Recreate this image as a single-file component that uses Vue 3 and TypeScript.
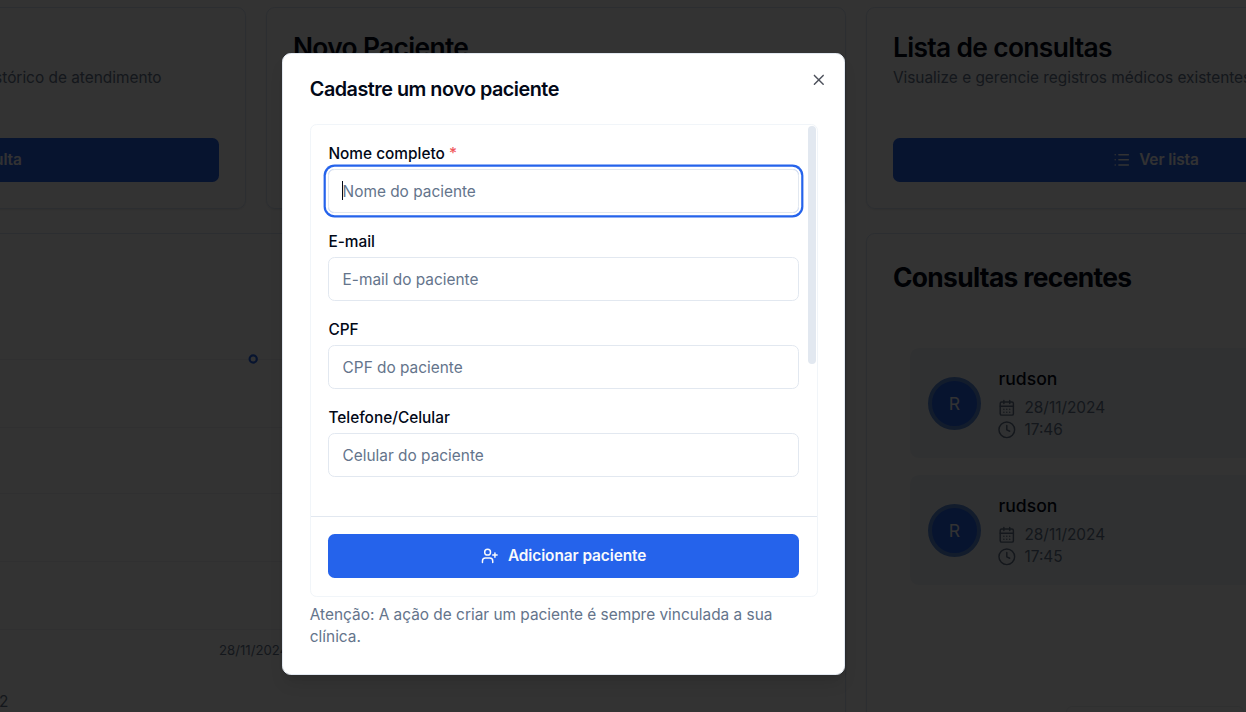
<script setup lang="ts">
interface Field {
  id: string
  label: string
  placeholder: string
  required?: boolean
  focused?: boolean
}

interface Appointment {
  name: string
  date: string
  time: string
}

const fields: Field[] = [
  { id: 'name', label: 'Nome completo', placeholder: 'Nome do paciente', required: true, focused: true },
  { id: 'email', label: 'E-mail', placeholder: 'E-mail do paciente' },
  { id: 'cpf', label: 'CPF', placeholder: 'CPF do paciente' },
  { id: 'phone', label: 'Telefone/Celular', placeholder: 'Celular do paciente' },
]

const appointments: Appointment[] = [
  { name: 'rudson', date: '28/11/2024', time: '17:46' },
  { name: 'rudson', date: '28/11/2024', time: '17:45' },
]

const gridLines: number[] = [125.5, 193.5, 259.5, 327.5, 395.5]
</script>

<template>
  <div class="screen">
    <main class="page">
      <section class="card action">
        <h2>Nova consulta</h2>
        <p class="right">Registre o histórico de atendimento</p>
        <button class="primary">
          <svg class="icon" viewBox="0 0 24 24"><path d="M5 12h14M12 5v14" /></svg>
          <span>Nova consulta</span>
        </button>
      </section>
      <section class="card action">
        <h2>Novo Paciente</h2>
      </section>
      <section class="card action">
        <h2>Lista de consultas</h2>
        <p>Visualize e gerencie registros médicos existentes</p>
        <button class="primary">
          <svg class="icon" viewBox="0 0 24 24"><path d="M3 5h.01M3 12h.01M3 19h.01M8 5h13M8 12h13M8 19h13" /></svg>
          <span>Ver lista</span>
        </button>
      </section>

      <section class="card chart-card">
        <svg class="chart" width="1180" height="520" viewBox="0 0 1180 520">
          <line v-for="y in gridLines" :key="y" x1="0" x2="1180" :y1="y" :y2="y" />
          <circle cx="586.2" cy="125" r="3.6" />
          <text class="tick" x="552" y="421">28/11/2024</text>
          <text class="total" x="341.5" y="473" text-anchor="end">Total: 2</text>
        </svg>
      </section>
      <section class="card recent">
        <h2>Consultas recentes</h2>
        <div class="list">
          <article v-for="item in appointments" :key="item.time" class="appointment">
            <div class="avatar">R</div>
            <div class="details">
              <strong>{{ item.name }}</strong>
              <span class="meta">
                <svg class="icon" viewBox="0 0 24 24">
                  <path d="M8 2v4M16 2v4M3 10h18M8 14h.01M12 14h.01M16 14h.01M8 18h.01M12 18h.01M16 18h.01" />
                  <rect x="3" y="4" width="18" height="18" rx="2" />
                </svg>
                {{ item.date }}
              </span>
              <span class="meta">
                <svg class="icon" viewBox="0 0 24 24"><circle cx="12" cy="12" r="10.7" /><path d="M12 6v6l4 2" /></svg>
                {{ item.time }}
              </span>
            </div>
          </article>
        </div>
      </section>
    </main>
    <div class="floating"></div>

    <div class="overlay">
      <div class="dialog" role="dialog" aria-labelledby="dialog-title">
        <button class="close" aria-label="Fechar">
          <svg viewBox="0 0 24 24"><path d="M18 6 6 18M6 6l12 12" /></svg>
        </button>
        <h1 id="dialog-title">Cadastre um novo paciente</h1>
        <form class="panel" @submit.prevent>
          <div class="scroll">
            <div v-for="field in fields" :key="field.id" class="field">
              <label :for="field.id">{{ field.label }} <span v-if="field.required" class="star">*</span></label>
              <div class="control" :class="{ focused: field.focused }">
                <input :id="field.id" type="text" :placeholder="field.placeholder" />
                <i v-if="field.focused" class="caret"></i>
              </div>
            </div>
            <div class="thumb"></div>
          </div>
          <div class="footer">
            <button class="primary" type="submit">
              <svg class="icon" viewBox="0 0 24 24">
                <path d="M16 21v-2a4 4 0 0 0-4-4H6a4 4 0 0 0-4 4v2M19 8v6M22 11h-6" />
                <circle cx="9" cy="7" r="4" />
              </svg>
              <span>Adicionar paciente</span>
            </button>
          </div>
        </form>
        <p class="notice">Atenção: A ação de criar um paciente é sempre vinculada a sua clínica.</p>
      </div>
    </div>
  </div>
</template>

<style>
body {
  margin: 0;
  overflow: hidden;
}
</style>

<style scoped>
.screen {
  position: relative;
  width: 1246px;
  height: 712px;
  overflow: hidden;
  background: #fff;
  color: #020817;
  font-family: Inter, "Liberation Sans", sans-serif;
  font-size: 15.4px;
  line-height: 22px;
}
.screen * {
  box-sizing: border-box;
}
h1,
h2,
p {
  margin: 0;
}
button,
input {
  font: inherit;
}
.page {
  display: grid;
  grid-template-columns: repeat(3, 580.5px);
  grid-template-rows: 202px 620px;
  gap: 24px 19.5px;
  margin-left: -334.5px;
  padding-top: 7px;
}
.card {
  border: 1px solid #d9e3f4;
  border-radius: 8.8px;
  box-shadow: 0 1px 2px rgba(0, 0, 0, 0.08);
  overflow: hidden;
}
.action {
  display: flex;
  flex-direction: column;
  padding: 25px 26.4px 26px;
}
.card h2 {
  font-size: 26.4px;
  line-height: 28px;
  font-weight: 600;
  letter-spacing: -0.66px;
}
.action p {
  margin-top: 6px;
  color: #64748b;
  white-space: nowrap;
}
.action .right {
  align-self: flex-end;
  margin-right: 57px;
}
.primary {
  display: flex;
  align-items: center;
  justify-content: center;
  gap: 8.8px;
  width: 100%;
  height: 44px;
  margin: 0;
  padding: 0;
  border: 0;
  border-radius: 6.6px;
  background: #2563eb;
  color: #f8fafc;
  font-weight: 600;
  letter-spacing: -0.07px;
}
.action .primary {
  margin-top: auto;
}
.icon {
  width: 17.6px;
  height: 17.6px;
  flex: none;
  fill: none;
  stroke: currentColor;
  stroke-width: 2;
  stroke-linecap: round;
  stroke-linejoin: round;
}
.chart-card {
  grid-column: span 2;
}
.chart {
  display: block;
}
.chart line {
  stroke: #f0f1f3;
}
.chart circle {
  fill: #fff;
  stroke: #2563eb;
  stroke-width: 2.2;
}
.tick {
  fill: #64748b;
  font-size: 13.2px;
}
.total {
  fill: #64748b;
  font-size: 15.4px;
}
.recent {
  padding: 29px 26.4px;
}
.recent h2 {
  font-weight: 700;
}
.list {
  display: flex;
  flex-direction: column;
  gap: 17.6px;
  padding: 57px 17.6px 0;
}
.appointment {
  display: flex;
  align-items: center;
  gap: 17.6px;
  height: 109.5px;
  padding: 2px 17.6px 0;
  border-radius: 8.8px;
  background: #f1f5f9;
}
.avatar {
  display: grid;
  place-items: center;
  width: 52.8px;
  height: 52.8px;
  border: 4.4px solid #5b8bdc;
  border-radius: 50%;
  background: #2563eb;
  color: #f8fafc;
  font-size: 17.6px;
}
.details {
  display: flex;
  flex-direction: column;
}
.details strong {
  margin-bottom: 4.4px;
  font-size: 17.6px;
  line-height: 26.4px;
  font-weight: 500;
}
.meta {
  display: flex;
  align-items: center;
  gap: 8.4px;
  color: #64748b;
}
.floating {
  position: absolute;
  left: 1065.5px;
  top: 705.5px;
  width: 178px;
  height: 44px;
  border: 1px solid #eceef1;
  border-radius: 6px;
}
.overlay {
  position: absolute;
  inset: 0;
  display: flex;
  justify-content: center;
  align-items: flex-start;
  padding: 53px 118.2px 0 0;
  background: rgba(0, 0, 0, 0.8);
}
.dialog {
  position: relative;
  width: 563px;
  height: 622px;
  padding: 24.6px 26.4px;
  border: 1px solid #e2e8f0;
  border-radius: 8.8px;
  background: #fff;
  box-shadow: 0 11px 16px -3px rgba(0, 0, 0, 0.1), 0 4px 7px -4px rgba(0, 0, 0, 0.1);
}
.dialog h1 {
  font-size: 19.8px;
  line-height: 20px;
  font-weight: 600;
  letter-spacing: -0.495px;
}
.close {
  position: absolute;
  top: 16.6px;
  right: 17.2px;
  width: 17.6px;
  height: 17.6px;
  padding: 0;
  border: 0;
  background: none;
  color: #020817;
  opacity: 0.7;
}
.close svg {
  display: block;
  fill: none;
  stroke: currentColor;
  stroke-width: 2;
  stroke-linecap: round;
}
.panel {
  height: 473px;
  margin-top: 25px;
  border: 1px solid #f1f5f9;
  border-radius: 6.6px;
}
.scroll {
  position: relative;
  display: flex;
  flex-direction: column;
  gap: 19.8px;
  height: 391px;
  padding: 21px 17.6px 0;
}
.field {
  height: 68.2px;
}
.field label {
  display: block;
  margin-bottom: 8.4px;
  line-height: 15.4px;
  font-weight: 500;
}
.star {
  color: #f0595c;
}
.control {
  position: relative;
  height: 44px;
  border: 1px solid #e2e8f0;
  border-radius: 6.6px;
}
.focused {
  box-shadow: 0 0 0 2.2px #fff, 0 0 0 4.4px #2563eb;
}
.control input {
  display: block;
  width: 100%;
  height: 100%;
  padding: 0 13.2px;
  border: 0;
  outline: 0;
  background: transparent;
  color: #020817;
}
.control input::placeholder {
  color: #64748b;
  opacity: 1;
}
.caret {
  position: absolute;
  left: 13px;
  top: 11px;
  width: 1px;
  height: 19px;
  background: #020817;
}
.thumb {
  position: absolute;
  top: 1px;
  right: 1px;
  width: 8px;
  height: 238px;
  border-radius: 4px;
  background: #e2e8f0;
}
.footer {
  padding: 17px 17.6px 0;
  border-top: 1px solid #e2e8f0;
}
.footer .primary span {
  padding-top: 1px;
}
.notice {
  margin-top: 7px;
  color: #64748b;
}
</style>
